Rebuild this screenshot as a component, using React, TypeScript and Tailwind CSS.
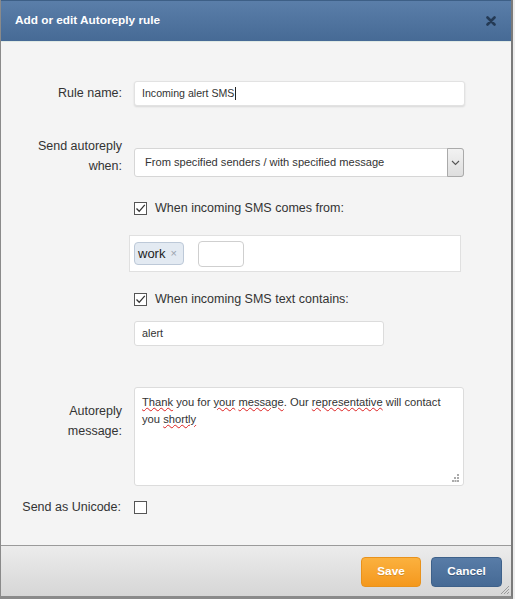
import React from "react";

const font = "font-['Liberation_Sans',Arial,sans-serif]";

function Check({ checked }: { checked: boolean }) {
  return (
    <div className="w-[13px] h-[13px] border border-[#555] bg-white flex items-center justify-center shrink-0">
      {checked && (
        <svg width="11" height="11" viewBox="0 0 11 11">
          <path d="M1.5 5.5 L4.2 8.3 L9.8 1.8" fill="none" stroke="#333" strokeWidth="1.3" />
        </svg>
      )}
    </div>
  );
}

function Wavy({ children }: { children: React.ReactNode }) {
  return (
    <span className="underline decoration-wavy decoration-[#d22] decoration-1 underline-offset-[1px]">{children}</span>
  );
}

export default function App() {
  return (
    <div className={`${font} w-[515px] h-[599px] bg-[#ededed] flex`}>
      <div className="w-[513px] h-[599px] flex flex-col border-l border-[#8a8a8a] border-r-2 border-r-[#7a7a7a] border-b-[3px] border-b-[#8a8a8a]">
        {/* Header */}
        <div className="h-[42px] shrink-0 bg-gradient-to-b from-[#5a7ea9] to-[#466a95] border-t border-[#3d5f86] border-b border-b-[#dfe9e4] flex items-center justify-between pl-[14px] pr-[14px]">
          <span className="text-white font-bold text-[11.8px] leading-none">Add or edit Autoreply rule</span>
          <svg width="10" height="10" viewBox="0 0 10 10" className="mr-[1px]">
            <path d="M1.5 1.5 L8.5 8.5 M8.5 1.5 L1.5 8.5" stroke="#243a55" strokeWidth="2.6" strokeLinecap="round" />
          </svg>
        </div>

        {/* Body */}
        <div className="flex-1 bg-[#f4f4f4] text-[#333] text-[12.5px] leading-[15px] pt-[39px]">
          {/* Rule name */}
          <div className="flex items-center">
            <div className="w-[121px] text-right">Rule name:</div>
            <div className="ml-[12px] w-[331px] h-[25px] bg-white border border-[#e2e2e2] rounded-[3px] shadow-[0_1px_2px_rgba(0,0,0,0.12)] flex items-center pl-[7px] text-[10.6px] text-[#333]">
              Incoming alert SMS<span className="inline-block w-px h-[13px] bg-[#222] ml-[1px]" />
            </div>
          </div>

          {/* Send autoreply when */}
          <div className="flex items-start mt-[30px]">
            <div className="w-[121px] text-right leading-[20px]">
              Send autoreply<br />when:
            </div>
            <div className="ml-[12px] mt-[12px] w-[330px] h-[29px] bg-white border border-[#d6d6d6] rounded-[3px] flex items-center justify-between">
              <span className="pl-[10px] text-[11.1px] text-[#333]">From specified senders / with specified message</span>
              <div className="w-[17px] h-[29px] -mr-px -my-px border border-[#aaa] bg-gradient-to-b from-[#f2f2f2] to-[#dedede] rounded-r-[3px] flex items-center justify-center">
                <svg width="9" height="6" viewBox="0 0 9 6">
                  <path d="M1 1 L4.5 4.5 L8 1" fill="none" stroke="#555" strokeWidth="1.1" />
                </svg>
              </div>
            </div>
          </div>

          {/* Comes from */}
          <div className="ml-[133px] mt-[24px] h-[15px] flex items-center gap-[8px]">
            <Check checked />
            <span>When incoming SMS comes from:</span>
          </div>
          <div className="ml-[128px] mt-[19px] w-[332px] h-[37px] bg-white border border-[#e0e0e0] flex items-center pl-[4px]">
            <div className="h-[23px] w-[50px] bg-[#e3eaf2] border border-[#bdc9d8] rounded-[4px] flex items-center pl-[3px] text-[13px] text-[#222]">
              work<span className="ml-[5px] text-[11px] text-[#9aa3ad]">×</span>
            </div>
            <div className="ml-[14px] w-[46px] h-[26px] bg-white border border-[#cfcfcf] rounded-[4px]" />
          </div>

          {/* Text contains */}
          <div className="ml-[133px] mt-[20px] h-[15px] flex items-center gap-[8px]">
            <Check checked />
            <span>When incoming SMS text contains:</span>
          </div>
          <div className="ml-[133px] mt-[14px] w-[250px] h-[25px] bg-white border border-[#dcdcdc] rounded-[3px] flex items-center pl-[7px] text-[10.8px] text-[#333]">
            alert
          </div>

          {/* Autoreply message */}
          <div className="flex items-start mt-[41px]">
            <div className="w-[121px] text-right leading-[20px] mt-[14px]">
              Autoreply<br />message:
            </div>
            <div className="relative ml-[12px] w-[330px] h-[99px] bg-white border border-[#dcdcdc] rounded-[3px] pl-[7px] pt-[6px] pr-[8px] text-[11.2px] leading-[17px] text-[#333]">
              <Wavy>Thank</Wavy> you for <Wavy>your</Wavy> <Wavy>message</Wavy>. Our <Wavy>representative</Wavy> will contact you <Wavy>shortly</Wavy>
              <svg width="8" height="8" viewBox="0 0 8 8" className="absolute right-[3px] bottom-[3px]">
                <rect x="5" y="0" width="2" height="2" fill="#aaa" />
                <rect x="2" y="3" width="2" height="2" fill="#aaa" />
                <rect x="5" y="3" width="2" height="2" fill="#aaa" />
                <rect x="0" y="6" width="2" height="2" fill="#aaa" />
                <rect x="2.5" y="6" width="2" height="2" fill="#aaa" />
                <rect x="5" y="6" width="2" height="2" fill="#aaa" />
              </svg>
            </div>
          </div>

          {/* Unicode */}
          <div className="flex items-center mt-[14px] h-[15px]">
            <div className="w-[120px] text-right">Send as Unicode:</div>
            <div className="ml-[13px]">
              <Check checked={false} />
            </div>
          </div>
        </div>

        {/* Footer */}
        <div className="relative h-[51px] shrink-0 border-t border-[#9a9a9a] bg-gradient-to-b from-[#ececec] to-[#d6d6d6] flex items-center justify-end gap-[10px] pr-[9px] pt-[1px]">
          <button className="w-[60px] h-[30px] rounded-[4px] border border-[#e8921c] bg-gradient-to-b from-[#fbb13e] to-[#f4981b] text-white font-bold text-[11.8px] [text-shadow:0_1px_0_rgba(0,0,0,0.15)]">
            Save
          </button>
          <button className="w-[71px] h-[30px] rounded-[4px] border border-[#3e618a] bg-gradient-to-b from-[#587ca7] to-[#466a95] text-white font-bold text-[11.8px] [text-shadow:0_1px_0_rgba(0,0,0,0.25)]">
            Cancel
          </button>
          <svg width="10" height="10" viewBox="0 0 10 10" className="absolute right-[1px] bottom-[1px]">
            <path d="M9 1 L1 9 M9 4 L4 9 M9 7 L7 9" stroke="#9a9a9a" strokeWidth="1" />
          </svg>
        </div>
      </div>
    </div>
  );
}
